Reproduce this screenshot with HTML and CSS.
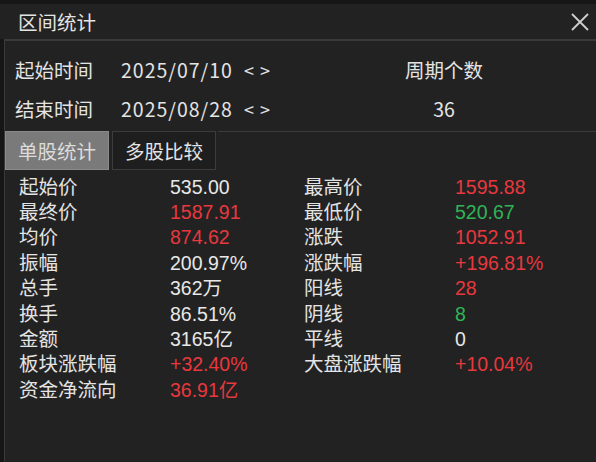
FILE: index.html
```html
<!DOCTYPE html>
<html lang="zh-CN">
<head>
    <meta charset="UTF-8">
    <meta name="viewport" content="width=device-width, initial-scale=1.0">
    <title>区间统计</title>
    <link rel="stylesheet" href="styles.css">
</head>
<body>
    <div class="dialog">
        <div class="titlebar">
            <span class="title">区间统计</span>
            <span class="close">
                <svg width="20" height="20" viewBox="0 0 20 20"><path d="M2 2 L18 18 M18 2 L2 18" stroke="#cfcfcf" stroke-width="1.8" fill="none"/></svg>
            </span>
        </div>
        <div class="panel">
            <div class="range">
                <div class="range-row">
                    <span class="range-label">起始时间</span>
                    <span class="range-date">2025/07/10</span>
                    <span class="arrows">&lt; &gt;</span>
                    <span class="period">周期个数</span>
                </div>
                <div class="range-row">
                    <span class="range-label">结束时间</span>
                    <span class="range-date">2025/08/28</span>
                    <span class="arrows">&lt; &gt;</span>
                    <span class="period">36</span>
                </div>
            </div>
            <div class="tabs">
                <div class="tab active">单股统计</div>
                <div class="tab">多股比较</div>
                <div class="tab-rest"></div>
            </div>
            <div class="stats">
                <div class="k">起始价</div><div class="v">535.00</div>
                <div class="k">最高价</div><div class="v up">1595.88</div>
                <div class="k">最终价</div><div class="v up">1587.91</div>
                <div class="k">最低价</div><div class="v down">520.67</div>
                <div class="k">均价</div><div class="v up">874.62</div>
                <div class="k">涨跌</div><div class="v up">1052.91</div>
                <div class="k">振幅</div><div class="v">200.97%</div>
                <div class="k">涨跌幅</div><div class="v up">+196.81%</div>
                <div class="k">总手</div><div class="v">362万</div>
                <div class="k">阳线</div><div class="v up">28</div>
                <div class="k">换手</div><div class="v">86.51%</div>
                <div class="k">阴线</div><div class="v down">8</div>
                <div class="k">金额</div><div class="v">3165亿</div>
                <div class="k">平线</div><div class="v">0</div>
                <div class="k">板块涨跌幅</div><div class="v up">+32.40%</div>
                <div class="k">大盘涨跌幅</div><div class="v up">+10.04%</div>
                <div class="k">资金净流向</div><div class="v up">36.91亿</div>
            </div>
        </div>
    </div>
</body>
</html>
```

FILE: styles.css
```css
body {
    margin: 0;
    background: #161616;
    font-family: "Noto Sans CJK SC", "Noto Sans", sans-serif;
    color: #e4e4e4;
}
.dialog {
    width: 596px;
    height: 462px;
    padding-top: 4px;
    box-sizing: border-box;
    background: #161616;
}
.titlebar {
    height: 35px;
    display: flex;
    align-items: center;
    justify-content: space-between;
    padding: 0 6px 0 18px;
    background: #222222;
}
.title {
    font-size: 19.5px;
}
.close {
    display: flex;
}
.panel {
    height: 423px;
    margin-left: 4px;
    border-top: 2px solid #3a3a3a;
    border-left: 1px solid #3a3a3a;
    background: #222222;
}
.range {
    padding: 9px 0 0 10px;
}
.range-row {
    display: flex;
    align-items: center;
    height: 39px;
    font-size: 19.5px;
}
.range-label {
    width: 106px;
}
.range-date {
    width: 123px;
    font-size: 19.5px;
    letter-spacing: 1px;
}
.arrows {
    width: 150px;
    font-size: 18px;
    word-spacing: 2px;
}
.period {
    width: 100px;
    text-align: center;
}
.tabs {
    display: flex;
    height: 39px;
    margin-top: 3px;
}
.tab {
    width: 104px;
    display: flex;
    align-items: center;
    justify-content: center;
    font-size: 19.5px;
    border: 1px solid #3c3c3c;
    background: #1e1e1e;
    margin-right: 2px;
    box-sizing: border-box;
}
.tab.active {
    background: #7a7a7a;
    border-color: #8a8a8a;
    color: #dcdcdc;
    margin-right: 3px;
}
.tab-rest {
    flex: 1;
    border-top: 1px solid #3c3c3c;
}
.stats {
    display: grid;
    grid-template-columns: 151px 134px 151px auto;
    grid-auto-rows: 25.4px;
    align-items: center;
    padding: 4px 0 0 14px;
    font-family: "Liberation Sans", "Noto Sans CJK SC", sans-serif;
    font-size: 19.5px;
    line-height: 24px;
}
.k, .v {
    white-space: nowrap;
}
.k {
    color: #e4e4e4;
}
.v {
    color: #e8e8e8;
}
.v.up {
    color: #e8383e;
}
.v.down {
    color: #2fb457;
}
```
